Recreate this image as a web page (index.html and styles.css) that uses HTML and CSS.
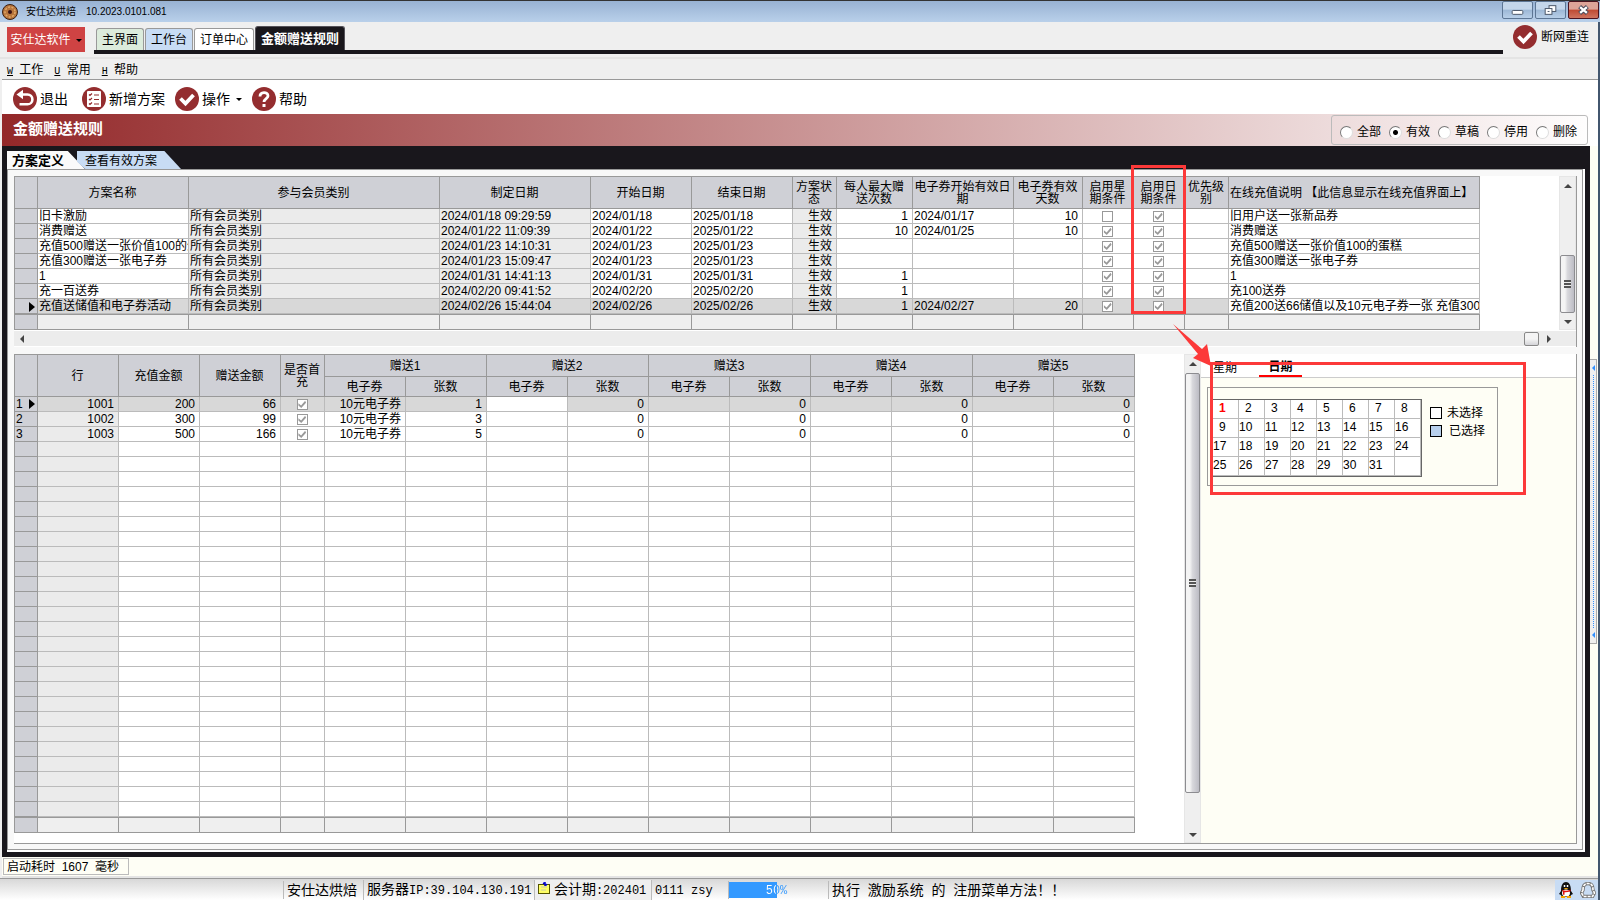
FILE: index.html
```
<!DOCTYPE html>
<html lang="zh-CN">
<head>
    <meta charset="UTF-8">
    <meta name="viewport" content="width=device-width, initial-scale=1.0">
    <title>安仕达烘焙</title>
    <link rel="stylesheet" href="styles.css">
</head>
<body>
    <svg class="symbols" aria-hidden="true">
        <symbol id="icon-check" viewBox="0 0 24 24">
            <circle cx="12" cy="12" r="12" fill="#942d2f"/>
            <path d="M5.500 11.500l5 5 8-8.500" fill="none" stroke="#fff" stroke-width="3.800"/>
        </symbol>
        <symbol id="icon-back" viewBox="0 0 24 24">
            <circle cx="12" cy="12" r="12" fill="#942d2f"/>
            <path d="M7 7.500h7.500a4.700 4.700 0 0 1 0 9.800H6.500" fill="none" stroke="#fff" stroke-width="2.600"/>
            <path d="M3.500 7.500L10 2.800v9.400z" fill="#fff"/>
        </symbol>
        <symbol id="icon-list" viewBox="0 0 24 24">
            <circle cx="12" cy="12" r="12" fill="#942d2f"/>
            <rect x="5" y="4" width="14" height="16" rx="1" fill="#fff"/>
            <path d="M7 7.500l1 1 2-2M7 12l1 1 2-2M7 16.500l1 1 2-2M12 8h5M12 12.500h5M12 17h5" fill="none" stroke="#942d2f" stroke-width="1.200"/>
        </symbol>
        <symbol id="icon-help" viewBox="0 0 24 24">
            <circle cx="12" cy="12" r="12" fill="#942d2f"/>
            <path d="M8 9.500c0-5 8-5 8-.5 0 2.500-4 2.800-4 6" fill="none" stroke="#fff" stroke-width="2.800"/>
            <rect x="10.500" y="17" width="3" height="3" fill="#fff"/>
        </symbol>
    </svg>

    <header class="titlebar">
        <svg class="app-icon" viewBox="0 0 16 16">
            <circle cx="8" cy="8" r="7.500" fill="#b8763c" stroke="#3a1f12"/>
            <circle cx="8" cy="8" r="5" fill="none" stroke="#e0a868" stroke-width="1.500" stroke-dasharray="2 1.500"/>
            <circle cx="8" cy="8" r="2" fill="#3a1212"/>
        </svg>
        <span>安仕达烘焙</span>
        <span class="version">10.2023.0101.081</span>
        <div class="win-buttons">
            <button class="win-button" aria-label="最小化">
                <svg viewBox="0 0 30 16"><rect x="9.500" y="8.500" width="11" height="4" rx="1" fill="#fff" stroke="#4a5668"/></svg>
            </button>
            <button class="win-button" aria-label="还原">
                <svg viewBox="0 0 30 16">
                    <rect x="13.500" y="3.500" width="7" height="6" fill="#fff" stroke="#4a5668"/>
                    <rect x="9.500" y="6.500" width="7" height="6" fill="#fff" stroke="#4a5668"/>
                    <rect x="12" y="9" width="2" height="1" fill="#4a5668"/>
                </svg>
            </button>
            <button class="win-button close" aria-label="关闭">
                <svg viewBox="0 0 30 16">
                    <path d="M11 4.500l8 7M19 4.500l-8 7" stroke="#4a4a5a" stroke-width="4.500"/>
                    <path d="M11.500 5l7 6M18.500 5l-7 6" stroke="#fff" stroke-width="2.400"/>
                </svg>
            </button>
        </div>
    </header>

    <div class="window">
        <div class="topbar">
            <button class="brand">安仕达软件<i class="caret"></i></button>
            <nav class="main-tabs">
                <button class="main-tab green">主界面</button>
                <button class="main-tab blue">工作台</button>
                <button class="main-tab">订单中心</button>
                <button class="main-tab active">金额赠送规则</button>
            </nav>
            <button class="reconnect"><svg class="icon"><use href="#icon-check"/></svg>断网重连</button>
        </div>

        <nav class="menubar">
            <button><u>W</u> 工作</button>
            <button><u>U</u> 常用</button>
            <button><u>H</u> 帮助</button>
        </nav>

        <div class="toolbar">
            <button class="exit"><svg class="icon"><use href="#icon-back"/></svg>退出</button>
            <button><svg class="icon"><use href="#icon-list"/></svg>新增方案</button>
            <button><svg class="icon"><use href="#icon-check"/></svg>操作<i class="caret"></i></button>
            <button><svg class="icon"><use href="#icon-help"/></svg>帮助</button>
        </div>

        <div class="banner">
            <h1>金额赠送规则</h1>
            <div class="filter">
                <label><input type="radio" name="state">全部</label>
                <label><input type="radio" name="state" checked>有效</label>
                <label><input type="radio" name="state">草稿</label>
                <label><input type="radio" name="state">停用</label>
                <label><input type="radio" name="state">删除</label>
            </div>
        </div>

        <div class="work">
            <main class="frame">
                <div class="page-tabs">
                    <button class="page-tab current">方案定义</button>
                    <button class="page-tab">查看有效方案</button>
                </div>
                <div class="page">
                    <div class="panel">
                        <section class="plans">
                            <div class="plans-body">
                                <table class="grid plan-grid">
                                    <colgroup>
                                        <col class="w23"><col class="w151"><col class="w251"><col class="w151">
                                        <col class="w101"><col class="w101"><col class="w44"><col class="w76">
                                        <col class="w101"><col class="w69"><col class="w51"><col class="w51">
                                        <col class="w44"><col class="w251">
                                    </colgroup>
                                    <thead>
                                        <tr>
                                            <th></th>
                                            <th>方案名称</th>
                                            <th>参与会员类别</th>
                                            <th>制定日期</th>
                                            <th>开始日期</th>
                                            <th>结束日期</th>
                                            <th>方案状<br>态</th>
                                            <th>每人最大赠<br>送次数</th>
                                            <th>电子券开始有效日<br>期</th>
                                            <th>电子券有效<br>天数</th>
                                            <th>启用星<br>期条件</th>
                                            <th>启用日<br>期条件</th>
                                            <th>优先级<br>别</th>
                                            <th class="left">在线充值说明 【此信息显示在线充值界面上】</th>
                                        </tr>
                                    </thead>
                                    <tbody id="plan-rows"></tbody>
                                    <tfoot>
                                        <tr><td></td><td></td><td></td><td></td><td></td><td></td><td></td><td></td><td></td><td></td><td></td><td></td><td></td><td></td></tr>
                                    </tfoot>
                                </table>
                                <div class="vscroll plan-scroll">
                                    <i class="arrow up"></i>
                                    <div class="thumb"><i class="grip"></i></div>
                                    <i class="arrow down"></i>
                                </div>
                                <div class="mark"></div>
                                <svg class="pointer" viewBox="0 0 40 46">
                                    <path d="M1 1L30 26l5-5 4 22-18-8 5-4z" fill="#fc3939"/>
                                </svg>
                            </div>
                            <div class="hscroll">
                                <i class="arrow prev"></i>
                                <div class="hthumb"></div>
                                <i class="arrow next"></i>
                            </div>
                        </section>

                        <section class="details">
                            <table class="grid gift-grid">
                                <colgroup>
                                    <col class="w23"><col class="w81"><col class="w81"><col class="w81"><col class="w44">
                                    <col class="w81" span="10">
                                </colgroup>
                                <thead>
                                    <tr>
                                        <th rowspan="2"></th>
                                        <th rowspan="2">行</th>
                                        <th rowspan="2">充值金额</th>
                                        <th rowspan="2">赠送金额</th>
                                        <th rowspan="2">是否首<br>充</th>
                                        <th colspan="2">赠送1</th>
                                        <th colspan="2">赠送2</th>
                                        <th colspan="2">赠送3</th>
                                        <th colspan="2">赠送4</th>
                                        <th colspan="2">赠送5</th>
                                    </tr>
                                    <tr>
                                        <th>电子券</th><th>张数</th>
                                        <th>电子券</th><th>张数</th>
                                        <th>电子券</th><th>张数</th>
                                        <th>电子券</th><th>张数</th>
                                        <th>电子券</th><th>张数</th>
                                    </tr>
                                </thead>
                                <tbody id="gift-rows"></tbody>
                                <tfoot>
                                    <tr><td></td><td></td><td></td><td></td><td></td><td></td><td></td><td></td><td></td><td></td><td></td><td></td><td></td><td></td><td></td></tr>
                                </tfoot>
                            </table>
                            <div class="vscroll gift-scroll">
                                <i class="arrow up"></i>
                                <div class="thumb"><i class="grip"></i></div>
                                <i class="arrow down"></i>
                            </div>
                            <aside class="side">
                                <div class="side-tabs">
                                    <button>星期</button>
                                    <button class="current">日期</button>
                                </div>
                                <div class="date-box">
                                    <table class="calendar">
                                        <tr><td class="one today">1</td><td class="one">2</td><td class="one">3</td><td class="one">4</td><td class="one">5</td><td class="one">6</td><td class="one">7</td><td class="one">8</td></tr>
                                        <tr><td class="one">9</td><td>10</td><td>11</td><td>12</td><td>13</td><td>14</td><td>15</td><td>16</td></tr>
                                        <tr><td>17</td><td>18</td><td>19</td><td>20</td><td>21</td><td>22</td><td>23</td><td>24</td></tr>
                                        <tr><td>25</td><td>26</td><td>27</td><td>28</td><td>29</td><td>30</td><td>31</td><td></td></tr>
                                    </table>
                                    <ul class="legend">
                                        <li><i class="swatch"></i>未选择</li>
                                        <li><i class="swatch picked"></i>已选择</li>
                                    </ul>
                                </div>
                                <div class="mark"></div>
                            </aside>
                        </section>
                    </div>
                </div>
            </main>
            <div class="rail"><i class="rail-arrow"></i><i class="rail-dots"></i><i class="rail-arrow"></i></div>
        </div>

        <div class="notice"><span>启动耗时&nbsp; 1607&nbsp; 毫秒</span></div>

        <footer class="statusbar">
            <span class="cell spacer"></span>
            <span class="cell company">安仕达烘焙</span>
            <span class="cell server">服务器<span class="mono">IP:39.104.130.191</span></span>
            <span class="cell period">
                <svg viewBox="0 0 12 12">
                    <rect x=".5" y="2.500" width="11" height="9" fill="#ffff66" stroke="#555500"/>
                    <path d="M3 5h6M3 8h5" stroke="#c8c8b0"/>
                    <path d="M7 0v4M5 1l4 2" stroke="#0000d0" stroke-width="1.500"/>
                </svg>
                会计期<span class="mono">:202401</span>
            </span>
            <span class="cell user"><span class="mono">0111 zsy</span></span>
            <span class="cell job"><span class="progress"><span class="bar" style="width: 50%"></span><span class="percent mono">50%</span></span></span>
            <span class="cell message">执行&nbsp; 激励系统&nbsp; 的&nbsp; 注册菜单方法！！</span>
            <span class="tray">
                <svg viewBox="0 0 16 16">
                    <path d="M3 9C3 3 5 0 8 0s5 3 5 9l2 3-2 1-1 2H4l-1-2-2-1z" fill="#111"/>
                    <ellipse cx="8" cy="11" rx="4" ry="3.500" fill="#fff"/>
                    <path d="M6.500 3v2M9.500 3v2" stroke="#fff" stroke-width="1.500"/>
                    <path d="M5.500 6h5L8 7.500z" fill="#f7a500"/>
                    <path d="M3.500 7.500q4.500 2.500 9 0v1.800q-3 1.200-6 1v2.500H5v-3z" fill="#e01010"/>
                    <path d="M3 15h4M9 15h4" stroke="#f7a500" stroke-width="2"/>
                </svg>
                <svg viewBox="0 0 16 16">
                    <path d="M3 8C3 3 5 1.500 8 1.500S13 3 13 8l1.500 3-2 3.500h-9l-2-3.500z" fill="none" stroke="#777" stroke-width="3.400"/>
                    <path d="M3 8C3 3 5 1.500 8 1.500S13 3 13 8l1.500 3-2 3.500h-9l-2-3.500z" fill="none" stroke="#fff" stroke-width="1.600" stroke-dasharray="3 1"/>
                </svg>
            </span>
        </footer>
    </div>

    <script>
        // name, created, start, end, max times, coupon start, coupon days, week flag, note
        const plans = [
            ['旧卡激励', '2024/01/18 09:29:59', '2024/01/18', '2025/01/18', '1', '2024/01/17', '10', false, '旧用户送一张新品券'],
            ['消费赠送', '2024/01/22 11:09:39', '2024/01/22', '2025/01/22', '10', '2024/01/25', '10', true, '消费赠送'],
            ['充值500赠送一张价值100的蛋糕', '2024/01/23 14:10:31', '2024/01/23', '2025/01/23', '', '', '', true, '充值500赠送一张价值100的蛋糕'],
            ['充值300赠送一张电子券', '2024/01/23 15:09:47', '2024/01/23', '2025/01/23', '', '', '', true, '充值300赠送一张电子券'],
            ['1', '2024/01/31 14:41:13', '2024/01/31', '2025/01/31', '1', '', '', true, '1'],
            ['充一百送券', '2024/02/20 09:41:52', '2024/02/20', '2025/02/20', '1', '', '', true, '充100送券'],
            ['充值送储值和电子券活动', '2024/02/26 15:44:04', '2024/02/26', '2025/02/26', '1', '2024/02/27', '20', true, '充值200送66储值以及10元电子券一张 充值300送']
        ];

        // line, amount, gift, count of coupons
        const gifts = [
            ['1001', '200', '66', '1'],
            ['1002', '300', '99', '3'],
            ['1003', '500', '166', '5']
        ];
        const giftRowCount = 28;

        function tick(checked, label) {
            return `<input type="checkbox" class="tick" aria-label="${label}" disabled ${checked ? 'checked' : ''}>`;
        }

        document.getElementById('plan-rows').innerHTML = plans.map((p, i) => {
            const last = i === plans.length - 1;
            return `<tr class="${last ? 'selected' : ''}">
                <td class="head">${last ? '<i class="row-arrow"></i>' : ''}</td>
                <td class="text">${p[0]}</td>
                <td class="locked">所有会员类别</td>
                <td class="locked">${p[1]}</td>
                <td>${p[2]}</td>
                <td>${p[3]}</td>
                <td class="locked num">生效</td>
                <td class="num">${p[4]}</td>
                <td>${p[5]}</td>
                <td class="num">${p[6]}</td>
                <td class="center">${tick(p[7], '启用星期条件')}</td>
                <td class="center">${tick(true, '启用日期条件')}</td>
                <td></td>
                <td class="white text">${p[8]}</td>
            </tr>`;
        }).join('');

        let rows = '';
        for (let i = 0; i < giftRowCount; i++) {
            const g = gifts[i];
            if (g) {
                rows += `<tr class="${i === 0 ? 'selected' : ''}">
                    <td class="head number">${i + 1}${i === 0 ? '<i class="row-arrow"></i>' : ''}</td>
                    <td class="locked num">${g[0]}</td>
                    <td class="num">${g[1]}</td>
                    <td class="num">${g[2]}</td>
                    <td class="center">${tick(true, '是否首充')}</td>
                    <td class="num">10元电子券</td>
                    <td class="num">${g[3]}</td>
                    <td class="white"></td><td class="num">0</td>
                    ${'<td></td><td class="num">0</td>'.repeat(3)}
                </tr>`;
            } else {
                rows += '<tr><td class="head"></td><td class="locked"></td>' + '<td></td>'.repeat(13) + '</tr>';
            }
        }
        document.getElementById('gift-rows').innerHTML = rows;
    </script>
</body>
</html>
```
FILE: styles.css
```
* {
    box-sizing: border-box;
}

body {
    margin: 0;
    height: 100vh;
    overflow: hidden;
    display: flex;
    flex-direction: column;
    font-family: "Liberation Sans", "Noto Sans CJK SC", sans-serif;
    font-size: 12px;
    line-height: 14px;
    color: #000;
    background-color: #efefef;
}

button {
    font: inherit;
    color: inherit;
    padding: 0;
    border: 0;
    background: none;
    white-space: nowrap;
}

.symbols {
    position: absolute;
    width: 0;
    height: 0;
}

.icon {
    width: 24px;
    height: 24px;
    flex: none;
}

.mono {
    font-family: "Liberation Mono", monospace;
    font-size: 12px;
}

.caret {
    display: inline-block;
    border: 3px solid transparent;
    border-top-color: #000;
    border-bottom: 0;
}

/* title bar */
.titlebar {
    display: flex;
    align-items: center;
    height: 22px;
    padding: 0 1px 0 2px;
    border-top: 1px solid #333;
    background: linear-gradient(#98b2d3, #b9d0ea);
    font-size: 10px;
}

.app-icon {
    width: 16px;
    height: 16px;
    margin-right: 8px;
}

.version {
    margin-left: 10px;
}

.win-buttons {
    display: flex;
    gap: 2px;
    margin-left: auto;
    align-self: flex-start;
}

.win-button {
    width: 31px;
    height: 18px;
    border: 1px solid #5d7694;
    border-radius: 2px;
    background: linear-gradient(#c4d6ea 45%, #9db8d6 50%, #b8cfe8);
}

.win-button svg {
    display: block;
    width: 100%;
    height: 16px;
}

.win-button.close {
    border-color: #4b1420;
    background: linear-gradient(#dda498 45%, #bf4a33 50%, #cf7460);
}

.window {
    flex: 1;
    min-height: 0;
    display: flex;
    flex-direction: column;
    border-right: 2px solid #42566e;
}

/* top tabs */
.topbar {
    display: flex;
    height: 37px;
    padding: 4px 9px 0 7px;
    border-bottom: 2px solid #e4e4e4;
}

.brand {
    height: 25px;
    width: 78px;
    margin-top: 1px;
    background-color: #cf4343;
    color: #fff;
}

.brand .caret {
    margin: 0 0 2px 5px;
}

.main-tabs {
    flex: 1;
    display: flex;
    align-items: flex-end;
    gap: 1px;
    height: 28px;
    margin: 0 10px 0 9px;
    padding-left: 2px;
    border-bottom: 4px solid #19171c;
}

.main-tab {
    height: 22px;
    padding: 0 5px;
    border: 1px solid #999;
    border-bottom: 0;
    border-radius: 3px 3px 0 0;
    background-color: #fff;
}

.main-tab.green {
    background-color: #dcecdc;
}

.main-tab.blue {
    background-color: #c8dcf4;
}

.main-tab.active {
    height: 24px;
    padding: 0 5px;
    border-color: #55535a;
    background-color: #19171c;
    color: #fff;
    font-size: 13px;
    font-weight: bold;
}

.reconnect {
    display: flex;
    align-items: center;
    gap: 4px;
    height: 21px;
}

/* menu and toolbar */
.menubar {
    display: flex;
    gap: 11px;
    height: 21px;
    margin-left: 2px;
    padding: 4px 0 0 5px;
    border-bottom: 1px solid #999;
}

.menubar u {
    font-family: "Liberation Mono", monospace;
    font-size: 10px;
    margin-right: 3px;
}

.toolbar {
    display: flex;
    align-items: center;
    gap: 10px;
    height: 34px;
    margin-left: 2px;
    padding: 3px 11px 0;
    background-color: #fff;
    font-size: 14px;
}

.toolbar button {
    display: flex;
    align-items: center;
    gap: 3px;
}

.toolbar .exit {
    margin-right: 4px;
}

.toolbar .caret {
    margin: 2px 0 0 3px;
}

.banner {
    display: flex;
    height: 32px;
    margin-left: 2px;
    padding: 1px 10px 1px 11px;
    background: linear-gradient(90deg, #932829, #fff);
}

.banner h1 {
    margin: 5px 0 0;
    font-size: 15px;
    line-height: 18px;
    color: #fff;
}

.filter {
    display: flex;
    align-items: center;
    gap: 8px;
    margin-left: auto;
    padding: 4px 10px 0 8px;
    border: 1px solid #bbb;
    border-radius: 3px;
}

.filter label {
    display: flex;
    align-items: center;
    gap: 4px;
}

.filter input {
    appearance: none;
    width: 13px;
    height: 13px;
    margin: 0;
    border: 1px solid;
    border-color: #777 #ddd #ddd #777;
    border-radius: 50%;
    background-color: #fff;
}

.filter input:checked {
    background-image: radial-gradient(#000 2px, transparent 3px);
}

/* black frame with the page inside */
.work {
    flex: 1;
    min-height: 0;
    display: flex;
    margin-left: 2px;
    background-color: #fefef5;
}

.frame {
    flex: 1;
    min-width: 0;
    display: flex;
    flex-direction: column;
    padding: 5px;
    background-color: #19171c;
}

.page-tabs {
    display: flex;
    height: 18px;
}

.page-tab {
    width: 104px;
    padding: 2px 0 0 8px;
    margin-left: -8px;
    text-align: left;
    background-color: #c8dcf4;
    clip-path: polygon(0 0, 84% 0, 100% 100%, 8% 100%, 0 60%);
}

.page-tab.current {
    width: 78px;
    margin-left: 0;
    padding-left: 5px;
    background-color: #fafafa;
    font-size: 13px;
    font-weight: bold;
    clip-path: polygon(0 0, 78% 0, 100% 100%, 0 100%);
}

.page {
    flex: 1;
    min-height: 0;
    display: flex;
    padding: 0 2px 2px 0;
    background-color: #fff;
}

.panel {
    flex: 1;
    min-width: 0;
    display: flex;
    flex-direction: column;
    gap: 7px;
    padding: 6px 5px 5px 6px;
    border: 1px solid #999;
    background-color: #f8f8f8;
}

.plans,
.details {
    border-right: 1px solid #999;
    background-color: #fff;
}

.plans-body {
    position: relative;
    display: flex;
    justify-content: space-between;
}

.details {
    flex: 1;
    min-height: 0;
    display: flex;
    border-bottom: 1px solid #999;
}

/* data grids */
.grid {
    flex: none;
    align-self: flex-start;
    table-layout: fixed;
    border-spacing: 0;
    border: 1px solid #999;
    border-width: 1px 0 0 1px;
}

.plan-grid {
    width: 1466px;
}

.gift-grid {
    width: 1121px;
}

.w23 { width: 23px; }
.w44 { width: 44px; }
.w51 { width: 51px; }
.w69 { width: 69px; }
.w76 { width: 76px; }
.w81 { width: 81px; }
.w101 { width: 101px; }
.w151 { width: 151px; }
.w251 { width: 251px; }

.grid th {
    padding: 0 1px 0 0;
    border: 1px solid #999;
    border-width: 0 1px 1px 0;
    background-color: #cfd0d6;
    font-weight: normal;
    line-height: 12px;
    white-space: nowrap;
}

.grid th.left {
    padding-left: 1px;
    text-align: left;
}

.plan-grid th {
    height: 32px;
}

.gift-grid tr:first-child th {
    height: 22px;
}

.gift-grid tr + tr th {
    height: 20px;
}

.grid td {
    height: 15px;
    padding: 0 2px 0 1px;
    border: 1px solid #bbb;
    border-width: 0 1px 1px 0;
    line-height: 14px;
    white-space: nowrap;
    overflow: hidden;
    background-color: #fff;
}

.grid td.text {
    padding-right: 0;
}

.grid td.locked {
    background-color: #ebebeb;
}

.grid .selected td {
    background-color: #d8d8d8;
}

.grid .selected td.white {
    background-color: #fff;
}

.grid td.head,
.grid .selected td.head {
    border-color: #999;
    background-color: #cfd0d6;
}

.grid td.num {
    padding-right: 4px;
    text-align: right;
}

.grid td.center {
    text-align: center;
}

.grid tfoot td {
    height: 16px;
    border-color: #999;
    border-top-width: 1px;
    background-color: #efefef;
}

.grid tfoot td:first-child {
    background-color: #cfd0d6;
}

.row-arrow {
    float: right;
    margin-top: 2px;
    border: 5px solid transparent;
    border-left: 6px solid #000;
    border-right: 0;
}

.tick {
    appearance: none;
    display: block;
    width: 11px;
    height: 11px;
    margin: 1px auto 0;
    border: 1px solid #999;
    background-color: #fff;
}

.tick:checked::after {
    content: "";
    display: block;
    width: 9px;
    height: 9px;
    background-color: #999;
    clip-path: polygon(10% 35%, 40% 60%, 85% 8%, 95% 30%, 42% 90%, 10% 62%);
}

/* scroll bars */
.vscroll {
    flex: none;
    width: 17px;
    display: flex;
    flex-direction: column;
    align-items: center;
    background-color: #efefef;
    border: 1px solid #e6e6e6;
}

.arrow {
    border: 4px solid transparent;
}

.arrow.up {
    border-top: 0;
    border-bottom-color: #444;
    margin: 7px 0;
}

.arrow.down {
    border-bottom: 0;
    border-top-color: #444;
    margin: auto 0 5px;
}

.arrow.prev {
    border-left: 0;
    border-right-color: #444;
}

.arrow.next {
    border-right: 0;
    border-left-color: #444;
}

.thumb {
    width: 15px;
    display: flex;
    align-items: center;
    justify-content: center;
    border: 1px solid #8c8c90;
    border-radius: 2px;
    background: linear-gradient(90deg, #f4f4f4 30%, #d8d8dc 50%, #bcbcc4);
}

.grip {
    width: 7px;
    height: 8px;
    background: repeating-linear-gradient(#555 0 2px, #eee 2px 3px);
}

.plan-scroll .thumb {
    height: 38%;
    margin-top: 60px;
}

.gift-scroll {
    margin-left: auto;
}

.gift-scroll .thumb {
    flex: 1;
}

.gift-scroll .arrow.down {
    margin-top: 40px;
}

.hscroll {
    display: flex;
    align-items: center;
    height: 16px;
    margin-top: 1px;
    padding: 0 25px 0 6px;
    border-bottom: 1px solid #fff;
    background-color: #ececec;
}

.hthumb {
    width: 15px;
    height: 14px;
    margin: 0 8px 0 auto;
    border: 1px solid #888;
    border-radius: 2px;
    background: linear-gradient(#f4f4f4 50%, #d4d4d8);
}

/* date picker side */
.side {
    position: relative;
    flex: none;
    width: 375px;
    background-color: #fefef5;
}

.side-tabs {
    display: flex;
    gap: 22px;
    height: 24px;
    padding-left: 12px;
    border-bottom: 1px solid #ccc;
    background-color: #fff;
}

.side-tabs button {
    height: 23px;
    padding-top: 5px;
}

.side-tabs .current {
    width: 43px;
    border-bottom: 2px solid #f00;
    font-weight: bold;
}

.date-box {
    display: flex;
    align-items: flex-start;
    gap: 8px;
    width: 291px;
    height: 99px;
    margin: 9px 0 0 6px;
    padding: 11px 0 0 4px;
    border: 1px solid #999;
}

.calendar {
    border-spacing: 0;
    border: 1px solid #666;
    background-color: #fff;
}

.calendar td {
    width: 26px;
    height: 19px;
    padding: 1px 2px 0 0;
    border: 1px solid #bbb;
    border-width: 0 1px 1px 0;
    vertical-align: top;
    line-height: 14px;
}

.calendar .one {
    padding-left: 6px;
}

.calendar .today {
    color: #f00;
    font-weight: bold;
}

.legend {
    list-style: none;
    margin: 5px 0 0;
    padding: 0;
}

.legend li {
    display: flex;
    align-items: center;
    gap: 5px;
    height: 18px;
}

.swatch {
    width: 12px;
    height: 12px;
    border: 1px solid #000;
    background-color: #fff;
}

.swatch.picked {
    margin-right: 2px;
    background-color: #b8d0ec;
}

/* red marks over the grids */
.mark {
    position: absolute;
    border: 3px solid #fc3939;
}

.plans .mark {
    left: 1117px;
    top: -11px;
    width: 55px;
    height: 149px;
}

.side .mark {
    left: 9px;
    top: 8px;
    width: 316px;
    height: 133px;
    z-index: 1;
}

.pointer {
    position: absolute;
    left: 1158px;
    top: 147px;
    width: 40px;
    height: 46px;
    z-index: 2;
}

/* collapsed side rail */
.rail {
    width: 7px;
    height: 285px;
    margin: 213px 1px 0 0;
    padding: 5px 0;
    display: flex;
    flex-direction: column;
    align-items: center;
    gap: 4px;
    border: 1px solid #aaa;
    border-left: 0;
    background-color: #efefef;
}

.rail-arrow {
    border: 3px solid transparent;
    border-left: 0;
    border-right-color: #2f8fff;
}

.rail-dots {
    flex: 1;
    border-left: 1px dotted #2f8fff;
}

/* bottom rows */
.notice {
    display: flex;
    height: 21px;
    margin-left: 2px;
    padding: 1px;
    border-bottom: 2px solid #e4e4e4;
    background-color: #fefef5;
}

.notice span {
    width: 126px;
    padding: 1px 0 0 3px;
    border: 1px solid #bbb;
}

.statusbar {
    display: flex;
    align-items: center;
    height: 22px;
    border-top: 1px solid #999;
    background: linear-gradient(#d8d8d8, #fff);
    font-size: 14px;
    line-height: 18px;
    white-space: nowrap;
}

.cell {
    padding-left: 3px;
    border-left: 1px solid #bbb;
}

.cell.spacer {
    width: 283px;
    border-left-color: #888;
}

.company {
    width: 80px;
}

.server {
    width: 171px;
}

.period {
    width: 117px;
    background-color: #efefef;
}

.period svg {
    width: 12px;
    height: 12px;
}

.user {
    width: 77px;
}

.job {
    width: 100px;
    padding-left: 0;
}

.progress {
    position: relative;
    display: block;
    height: 16px;
    margin: 1px 4px 1px 0;
}

.bar {
    display: block;
    height: 16px;
    background-color: #3399ff;
}

.percent {
    position: absolute;
    inset: 0;
    text-align: center;
    color: transparent;
    background: linear-gradient(90deg, #fff 50%, #3399ff 50%);
    background-clip: text;
}

.tray {
    display: flex;
    align-items: center;
    gap: 6px;
    height: 20px;
    margin-left: auto;
    padding: 0 2px 0 3px;
    background-color: #c8dcf4;
}

.tray svg {
    width: 16px;
    height: 16px;
}
```
